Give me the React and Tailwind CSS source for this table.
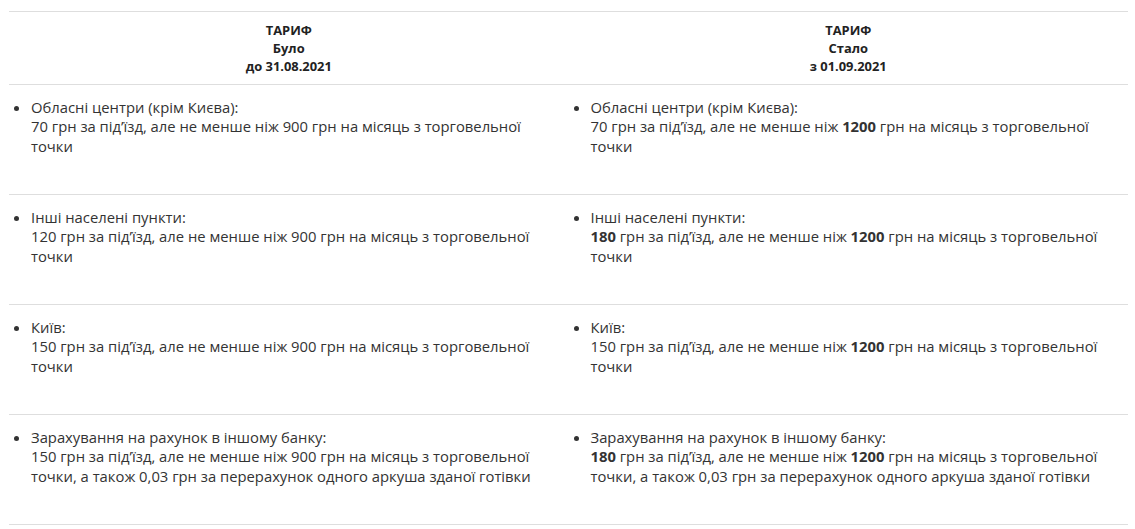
const rows = [
  {
    title: "Обласні центри (крім Києва):",
    before: ["70", "900", false],
    after: ["70", "1200", false],
  },
  {
    title: "Інші населені пункти:",
    before: ["120", "900", false],
    after: ["180", "1200", false],
    boldFeeAfter: true,
  },
  {
    title: "Київ:",
    before: ["150", "900", false],
    after: ["150", "1200", false],
  },
  {
    title: "Зарахування на рахунок в іншому банку:",
    before: ["150", "900", true],
    after: ["180", "1200", true],
    boldFeeAfter: true,
  },
];

const Cell = ({ title, fee, min, extra, boldFee, boldMin }) => (
  <td className="align-top border-b border-[#dedede] pt-[12.5px] pl-[5px] pr-2 h-[110px]">
    <ul className="list-disc pl-[17px]">
      <li>
        {title}
        <br />
        {boldFee ? <b>{fee}</b> : fee} грн за під’їзд, але не менше ніж{" "}
        {boldMin ? <b>{min}</b> : min} грн на місяць з торговельної точки
        {extra && ", а також 0,03 грн за перерахунок одного аркуша зданої готівки"}
      </li>
    </ul>
  </td>
);

export default function App() {
  return (
    <div
      className="bg-white w-[1135px] h-[529px] pt-[11px] pl-[9px] text-[#333]"
      style={{ fontFamily: '"Open Sans", sans-serif' }}
    >
      <table className="w-[1119px] border-collapse table-fixed text-[14.8px] leading-[19.5px]">
        <thead>
          <tr className="border-t border-b border-[#dedede]">
            <th className="h-[73px] text-center text-[12.9px] leading-[18px] font-bold text-[#222] w-1/2">
              ТАРИФ
              <br />
              Було
              <br />
              до 31.08.2021
            </th>
            <th className="h-[73px] text-center text-[12.9px] leading-[18px] font-bold text-[#222] w-1/2">
              ТАРИФ
              <br />
              Стало
              <br />з 01.09.2021
            </th>
          </tr>
        </thead>
        <tbody>
          {rows.map((r, i) => (
            <tr key={i}>
              <Cell title={r.title} fee={r.before[0]} min={r.before[1]} extra={r.before[2]} />
              <Cell
                title={r.title}
                fee={r.after[0]}
                min={r.after[1]}
                extra={r.after[2]}
                boldFee={r.boldFeeAfter}
                boldMin
              />
            </tr>
          ))}
        </tbody>
      </table>
    </div>
  );
}
